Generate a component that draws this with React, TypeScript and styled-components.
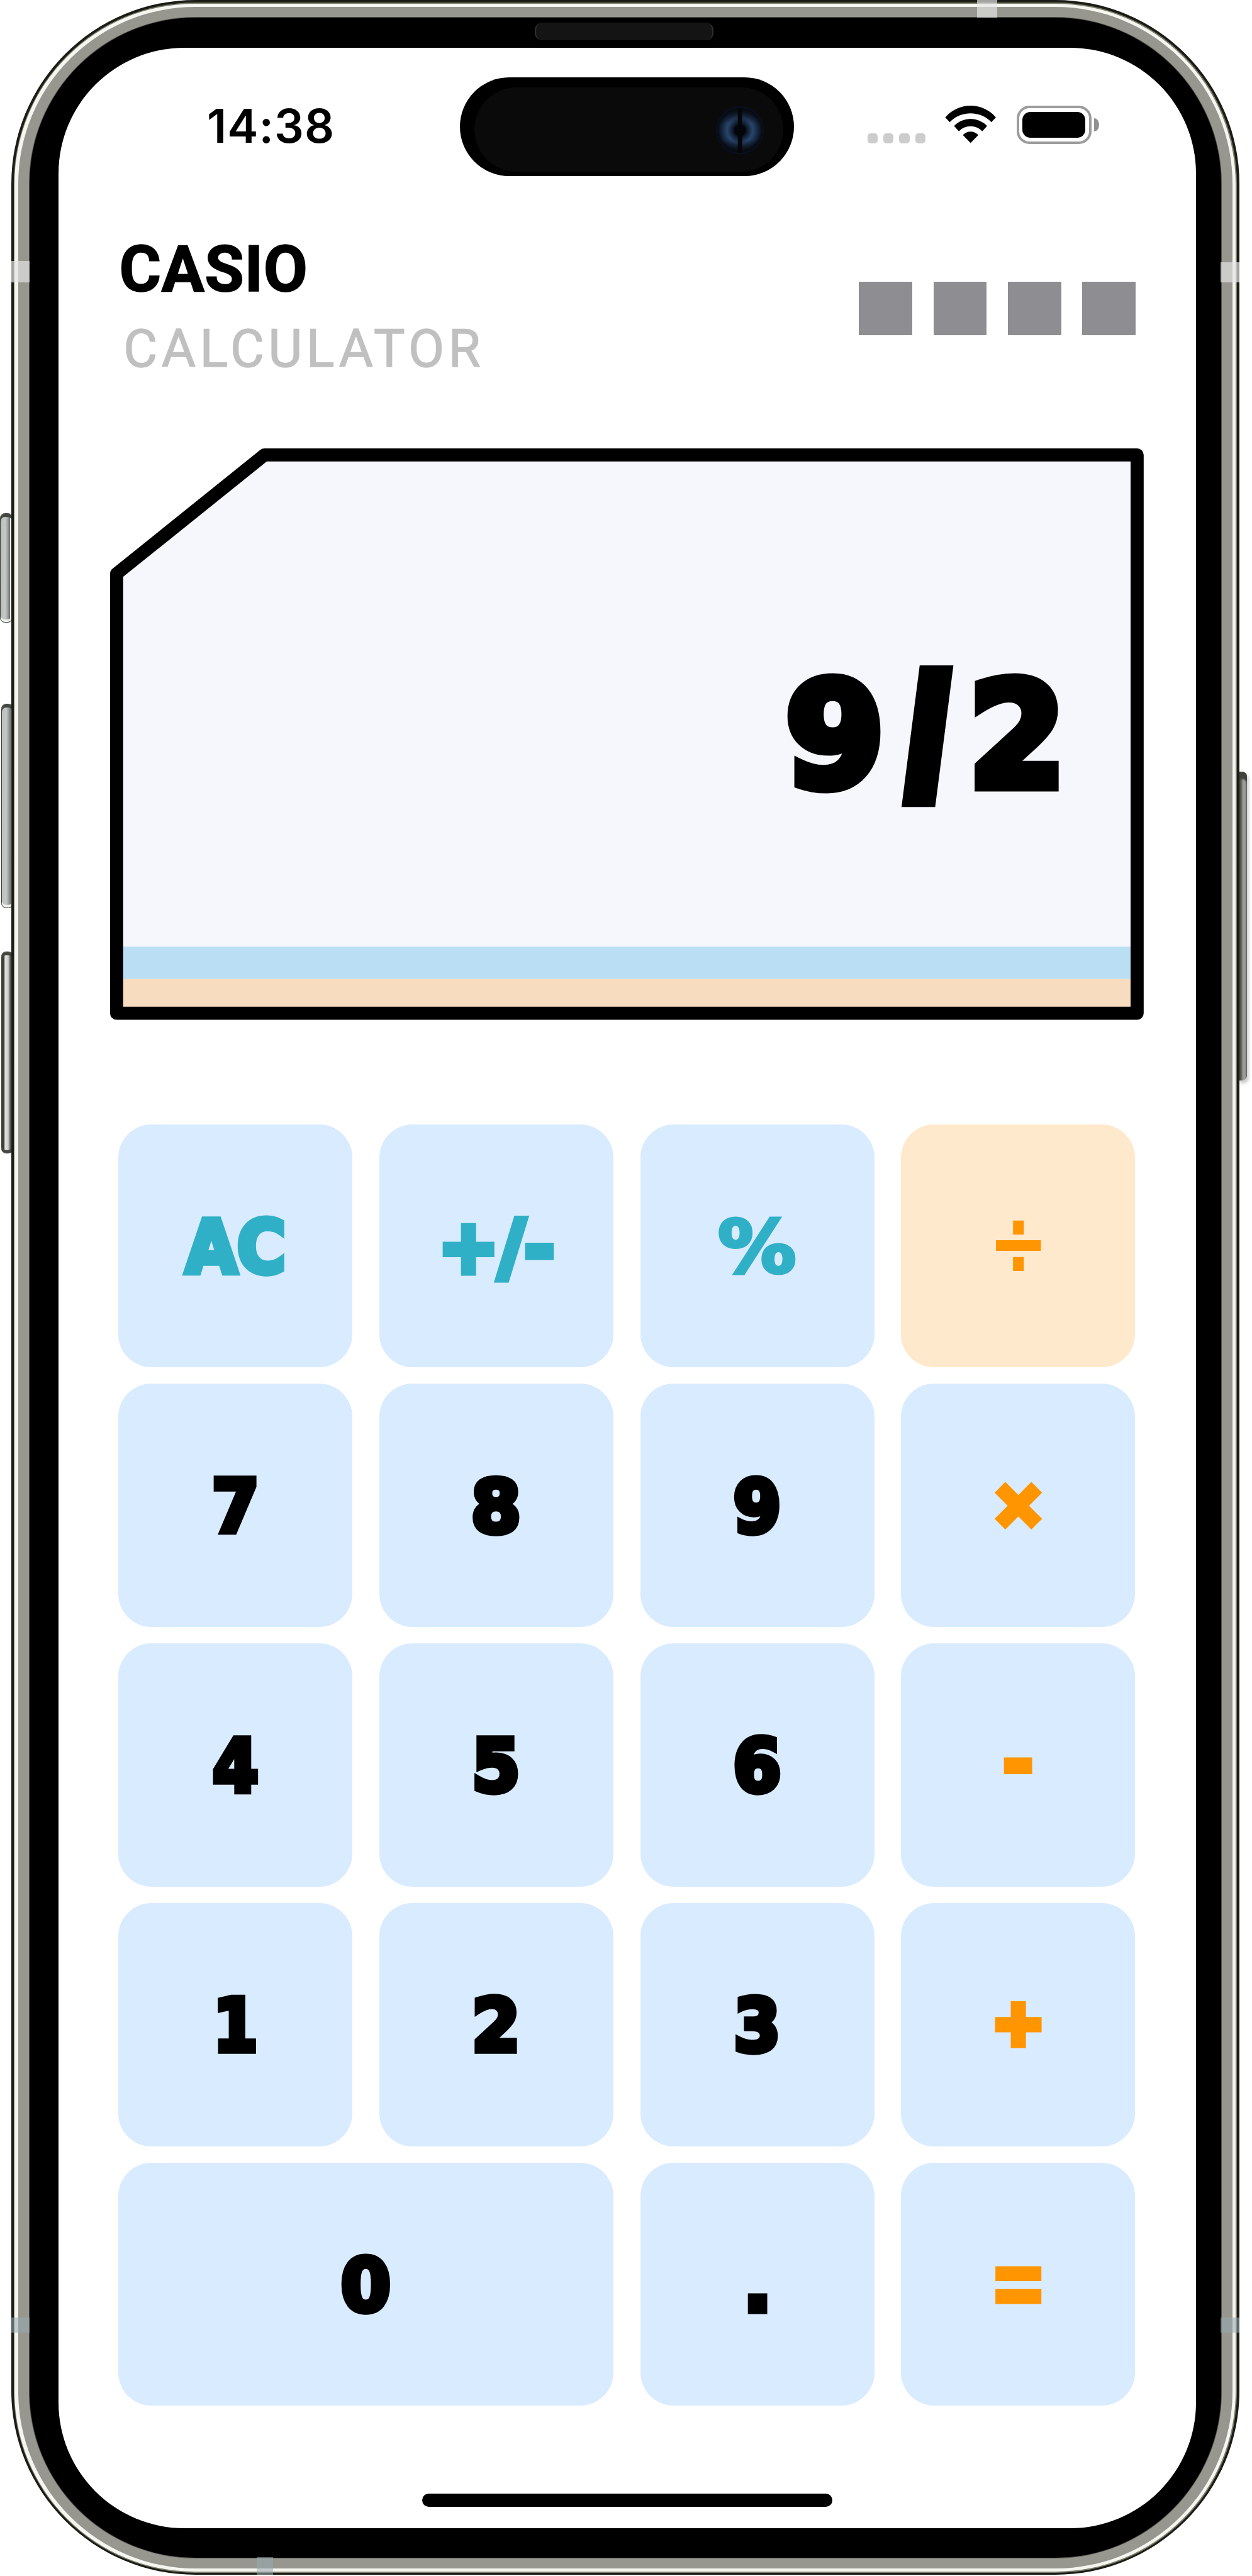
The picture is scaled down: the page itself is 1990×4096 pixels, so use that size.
import React from 'react';
import styled, { createGlobalStyle } from 'styled-components';

// Artboard units to CSS pixels.
const K = 1990 / 2347;
const u = (n: number) => `${(n * K).toFixed(3)}px`;

const Global = createGlobalStyle`
  * { box-sizing: border-box; }
  html, body { margin: 0; padding: 0; background: #fff; }
`;

const Stage = styled.main`
  position: relative;
  width: 1990px;
  height: 4096px;
  padding: 0 ${u(24)} 0 ${u(21)};
  overflow: hidden;
  background: #fff;
`;

const Shell = styled.div`
  position: relative;
  height: ${u(4829)};
  padding: ${u(4.5)};
  border-radius: ${u(345)};
  background: #1c1c16;
`;
const Olive = styled.div`
  height: 100%;
  padding: ${u(2)};
  border-radius: ${u(340)};
  background: #7a7c6c;
`;
const Highlight = styled.div`
  height: 100%;
  padding: ${u(6.5)} ${u(6.5)} ${u(5.5)};
  border-radius: ${u(338)};
  background: #f6f6f1;
`;
const Steel = styled.div`
  height: 100%;
  padding: ${u(20.5)} ${u(21)} ${u(20.5)};
  border-radius: ${u(332)};
  background: #979790;
`;
const Bezel = styled.div`
  height: 100%;
  padding: ${u(56)} ${u(47)} ${u(55)} ${u(54.5)};
  border-radius: ${u(311)};
  background: #000;
  box-shadow: 0 0 0 1px #55554f;
`;
const Screen = styled.div`
  height: 100%;
  display: flex;
  flex-direction: column;
  border-radius: ${u(236)};
  background: #fff;
  overflow: hidden;
`;

const Band = styled.i<{ $x: number; $y: number; $w: number; $h: number; $cool?: boolean }>`
  position: absolute;
  left: ${p => u(p.$x)};
  top: ${p => u(p.$y)};
  width: ${p => u(p.$w)};
  height: ${p => u(p.$h)};
  background: ${p => (p.$cool ? 'rgba(152,170,176,.55)' : 'rgba(228,228,228,.68)')};
`;

const SideButton = styled.i<{ $y: number; $h: number; $x: number; $w: number; $dark?: boolean }>`
  position: absolute;
  left: ${p => u(p.$x)};
  top: ${p => u(p.$y)};
  width: ${p => u(p.$w)};
  height: ${p => u(p.$h)};
  border-radius: ${u(9)};
  border: ${u(1.5)} solid #3a3b33;
  background: ${p => p.$dark
    ? 'linear-gradient(90deg,#3f4039 0 20%,#dcddd8 28% 48%,#b9bdbb 62%,#44453e 82%,#7c7d76 86%)'
    : 'linear-gradient(90deg,#b9bebc 0,#c5c9c8 40%,#9a9e9c 65%,#6b6e6a 80%,#f4f4ee 86%)'};
  box-shadow: inset 0 ${u(6)} 0 #45463f, inset 0 ${u(-5)} 0 ${p => (p.$dark ? '#45463f' : '#f0f0ea')};
`;
const PowerButton = styled.i`
  position: absolute;
  left: ${u(2321.5)};
  top: ${u(1447.5)};
  width: ${u(16.5)};
  height: ${u(578.5)};
  border-radius: ${u(2)} ${u(9)} ${u(9)} ${u(2)};
  background: linear-gradient(90deg, #3b3c35 0, #5c5d56 35%, #9b9c96 55%, #9b9c96 80%, #6f706a 100%);
  box-shadow: inset 0 ${u(14)} ${u(3)} #41423b, ${u(3)} ${u(5)} ${u(6)} rgba(0,0,0,.22);
`;

const Speaker = styled.i`
  position: absolute;
  left: ${u(982)};
  top: ${u(43)};
  width: ${u(334)};
  height: ${u(33)};
  border-radius: ${u(14)};
  background: #141414;
  border: solid #303030;
  border-width: 0 ${u(3)};
`;

const StatusBar = styled.header`
  height: ${u(310)};
  flex: none;
  display: grid;
  grid-template-columns: ${u(752.5)} ${u(626.5)} 1fr;
  padding-top: ${u(55.5)};
`;
const Clock = styled.time`
  display: block;
  height: ${u(183)};
  padding-left: ${u(278.5)};
  font: 600 ${u(87)}/${u(184)} Inter, "Liberation Sans", sans-serif;
  color: #000;
  letter-spacing: ${u(1.3)};
`;
const Island = styled.div`
  height: ${u(185)};
  border-radius: ${u(93)};
  background: #000;
  padding: ${u(19)} ${u(20)} ${u(8)} ${u(27)};
`;
const IslandCore = styled.div`
  height: 100%;
  border-radius: ${u(79)};
  background: #0a0a0a;
  display: flex;
  justify-content: flex-end;
  padding: ${u(35)} ${u(36)} 0 0;
`;
const Status = styled.div`
  display: flex;
  padding-left: ${u(137.5)};
  height: ${u(185)};
`;
const Signal = styled.div`
  display: flex;
  gap: ${u(11)};
  padding-top: ${u(105)};
  i { width: ${u(19)}; height: ${u(18.5)}; border-radius: ${u(6)}; background: #ccc; }
`;
const WifiBox = styled.div`
  padding: ${u(53)} 0 0 ${u(37)};
  svg { display: block; }
`;
const BatteryBox = styled.div`
  display: flex;
  align-items: center;
  gap: ${u(5)};
  height: ${u(72)};
  margin: ${u(53)} 0 0 ${u(37.5)};
`;
const BatteryBody = styled.div`
  width: ${u(141)};
  height: ${u(72)};
  padding: ${u(7)};
  border: ${u(5)} solid #9c9c9c;
  border-radius: ${u(24)};
  &::before { content: ''; display: block; height: 100%; border-radius: ${u(15)}; background: #000; }
`;
const BatteryTip = styled.i`
  width: ${u(9)};
  height: ${u(24)};
  border-radius: 0 ${u(9)} ${u(9)} 0 / 0 ${u(12)} ${u(12)} 0;
  background: #909090;
`;

const Brand = styled.section`
  flex: none;
  height: ${u(441)};
  display: flex;
  justify-content: space-between;
  padding: ${u(54)} ${u(113)} 0 ${u(112)};
`;
const Titles = styled.div`
  display: flex;
  flex-direction: column;
`;
const Logo = styled.h1`
  margin: ${u(3)} 0 0 ${u(2)};
  height: ${u(100)};
  font: 700 ${u(120)}/${u(100)} Roboto, Inter, sans-serif;
  letter-spacing: ${u(0.6)};
  -webkit-text-stroke: ${u(2)} #000;
  white-space: nowrap;
  color: #000;
`;
const Sub = styled.p`
  margin: ${u(49)} 0 0 ${u(10)};
  height: ${u(100)};
  font: 400 ${u(98)}/${u(100)} Roboto, Inter, sans-serif;
  letter-spacing: ${u(7.6)};
  -webkit-text-stroke: ${u(1.6)} #c0c0c0;
  white-space: nowrap;
  color: #c0c0c0;
`;
const Solar = styled.div`
  display: flex;
  gap: ${u(39.7)};
  padding-top: ${u(75)};
  i { width: ${u(100)}; height: ${u(100)}; background: #8e8d92; }
`;

const Display = styled.section`
  flex: none;
  position: relative;
  width: ${u(1938)};
  height: ${u(1072)};
  margin-left: ${u(97)};
  display: flex;
  align-items: center;
  justify-content: flex-end;
  > svg { position: absolute; inset: 0; width: 100%; height: 100%; }
`;
const Readout = styled.output`
  position: relative;
  display: flex;
  padding-right: ${u(146.5)};
  font: 700 ${u(272)}/1 "DejaVu Sans", Inter, sans-serif;
  color: #000;
`;
const Glyph = styled.span<{ $w: number; $stroke: number; $sx?: number; $skew?: number; $dx?: number; $dy?: number }>`
  width: ${p => u(p.$w)};
  display: flex;
  justify-content: center;
  white-space: pre;
  -webkit-text-stroke: ${p => u(p.$stroke)} #000;
  transform: translate(${p => u(p.$dx ?? 0)}, ${p => u(p.$dy ?? 0)}) skewX(${p => p.$skew ?? 0}deg) scaleX(${p => p.$sx ?? 1});
`;

const Pad = styled.div`
  flex: none;
  display: grid;
  grid-template-columns: repeat(4, ${u(438.6)});
  grid-auto-rows: ${u(456)};
  gap: ${u(30.8)} ${u(50.6)};
  margin: ${u(196)} 0 0 ${u(112.5)};
`;
type Tone = 'digit' | 'func' | 'op';
const inkOf = { digit: '#000', func: '#30b0c7', op: '#ff9500' };
const Key = styled.button<{ $tone: Tone; $wide?: boolean; $active?: boolean }>`
  display: flex;
  align-items: center;
  justify-content: center;
  grid-column: span ${p => (p.$wide ? 2 : 1)};
  padding: 0;
  border: 0;
  border-radius: ${u(62)};
  background: ${p => (p.$active ? '#ffe9cd' : '#d9ebff')};
  color: ${p => inkOf[p.$tone]};
  font: 700 ${u(137)}/1 "DejaVu Sans", Inter, sans-serif;
`;
const Label = styled.span<{ $stroke: number; $sx: number; $sy: number; $dy: number }>`
  display: block;
  white-space: pre;
  -webkit-text-stroke: ${p => u(p.$stroke)} currentColor;
  transform: translateY(${p => u(p.$dy)}) scale(${p => p.$sx}, ${p => p.$sy});
`;

const HomeBar = styled.i`
  display: block;
  flex: none;
  width: ${u(768.5)};
  height: ${u(25)};
  border-radius: ${u(12.5)};
  background: #000;
  margin: ${u(164.3)} auto 0 ${u(682)};
`;

interface KeyDef {
  t: string; tone: Tone; wide?: boolean; active?: boolean;
  stroke?: number; sx?: number; sy?: number; dy?: number;
}
const keys: KeyDef[] = [
  { t: 'AC', tone: 'func', sx: 0.91 },
  { t: '+/-', tone: 'func', stroke: 13, sx: 0.98 },
  { t: '%', tone: 'func', stroke: 6, sx: 1.07 },
  { t: '÷', tone: 'op', active: true, stroke: 0, sx: 0.98, sy: 1.27, dy: -6 },
  { t: '7', tone: 'digit', sx: 0.93 },
  { t: '8', tone: 'digit' },
  { t: '9', tone: 'digit', sx: 0.94 },
  { t: '×', tone: 'op', stroke: 18, sx: 0.84, sy: 0.84, dy: -3 },
  { t: '4', tone: 'digit', sx: 0.9 },
  { t: '5', tone: 'digit', sx: 0.95 },
  { t: '6', tone: 'digit', sx: 0.95 },
  { t: '-', tone: 'op', stroke: 12, dy: -6 },
  { t: '1', tone: 'digit', sx: 0.88 },
  { t: '2', tone: 'digit', sx: 0.95 },
  { t: '3', tone: 'digit', sx: 0.92 },
  { t: '+', tone: 'op', stroke: 18, sx: 0.84, sy: 0.84, dy: -3 },
  { t: '0', tone: 'digit', wide: true },
  { t: '.', tone: 'digit', stroke: 13 },
  { t: '=', tone: 'op', stroke: 4, sx: 0.96, sy: 1.4, dy: -5 },
];

const Camera = () => (
  <svg width={90 * K} height={90 * K} viewBox="0 0 90 90">
    <defs>
      <radialGradient id="lens">
        <stop offset="0" stopColor="#020409" />
        <stop offset=".22" stopColor="#050a12" />
        <stop offset=".55" stopColor="#28456b" />
        <stop offset=".75" stopColor="#172a45" />
        <stop offset=".95" stopColor="#080b14" />
      </radialGradient>
      <linearGradient id="shade" x1="0" y1="0" x2="0" y2="1">
        <stop offset="0" stopColor="#06090f" stopOpacity=".95" />
        <stop offset=".35" stopColor="#06090f" stopOpacity="0" />
        <stop offset=".7" stopColor="#06090f" stopOpacity="0" />
        <stop offset="1" stopColor="#06090f" stopOpacity=".95" />
      </linearGradient>
    </defs>
    <circle cx="45" cy="45" r="43.5" fill="url(#lens)" />
    <circle cx="45" cy="45" r="43.5" fill="url(#shade)" stroke="#0a0f1f" strokeWidth="3" />
    <rect x="41" y="3" width="8" height="84" fill="#04060a" />
    <circle cx="45" cy="45" r="11" fill="#03050a" />
  </svg>
);

const Wifi = () => (
  <svg width={96 * K} height={70 * K} viewBox="0 0 96 70">
    <path d="M.5 22A62.3 62.3 0 0 1 95.5 22L87 31A54 54 0 0 0 9 31Z" />
    <path d="M17 38A42.8 42.8 0 0 1 79 38L70 48A30.7 30.7 0 0 0 26 48Z" />
    <path d="M33.5 55A19.8 19.8 0 0 1 62.5 55L48 70Z" />
  </svg>
);

export default function App() {
  return (
    <>
      <Global />
      <Stage>
        <SideButton $x={0} $w={23} $y={962} $h={206} />
        <SideButton $x={2} $w={22.5} $y={1319.5} $h={383} />
        <SideButton $x={2} $w={23} $y={1784} $h={379.5} $dark />
        <PowerButton />
        <Shell>
          <Olive><Highlight><Steel><Bezel>
            <Screen>
              <StatusBar>
                <Clock>14:38</Clock>
                <Island><IslandCore><Camera /></IslandCore></Island>
                <Status>
                  <Signal><i /><i /><i /><i /></Signal>
                  <WifiBox><Wifi /></WifiBox>
                  <BatteryBox><BatteryBody /><BatteryTip /></BatteryBox>
                </Status>
              </StatusBar>
              <Brand>
                <Titles>
                  <Logo>CASIO</Logo>
                  <Sub>CALCULATOR</Sub>
                </Titles>
                <Solar><i /><i /><i /><i /></Solar>
              </Brand>
              <Display>
                <svg viewBox="207 841 1938 1072" preserveAspectRatio="none">
                  <path d="M496.3 853.3H2132.3V1900.3H219.2V1076Z" fill="#f6f7fc" />
                  <path d="M219 1775.5H2132V1836H219Z" fill="#badff5" />
                  <path d="M219 1836H2132V1900H219Z" fill="#f7dcbf" />
                  <path d="M496.3 853.3H2132.3V1900.3H219.2V1076Z" fill="none" stroke="#000" strokeWidth="24.5" strokeLinejoin="round" />
                </svg>
                <Readout>
                  <Glyph $w={187} $stroke={20} $sx={0.98} $dx={3} $dy={3}>9</Glyph>
                  <Glyph $w={156} $stroke={42} $sx={0.86} $skew={8} $dx={5} $dy={-4}>/</Glyph>
                  <Glyph $w={187} $stroke={20} $sx={0.96} $dx={3} $dy={3}>2</Glyph>
                </Readout>
              </Display>
              <Pad>
                {keys.map(k => (
                  <Key key={k.t} $tone={k.tone} $wide={k.wide} $active={k.active}>
                    <Label $stroke={k.stroke ?? 11} $sx={k.sx ?? 0.98} $sy={k.sy ?? 1} $dy={k.dy ?? 2}>{k.t}</Label>
                  </Key>
                ))}
              </Pad>
              <HomeBar />
            </Screen>
          </Bezel></Steel></Highlight></Olive>
          <Speaker />
          <Band $x={1811} $y={0} $w={37} $h={33} />
          <Band $x={0} $y={490} $w={35} $h={39} />
          <Band $x={2267} $y={492} $w={35} $h={37} />
          <Band $x={-1} $y={4346.5} $w={35} $h={27.5} $cool />
          <Band $x={2267} $y={4346.5} $w={36} $h={27.5} $cool />
          <Band $x={460} $y={4796} $w={31} $h={33} $cool />
        </Shell>
      </Stage>
    </>
  );
}
